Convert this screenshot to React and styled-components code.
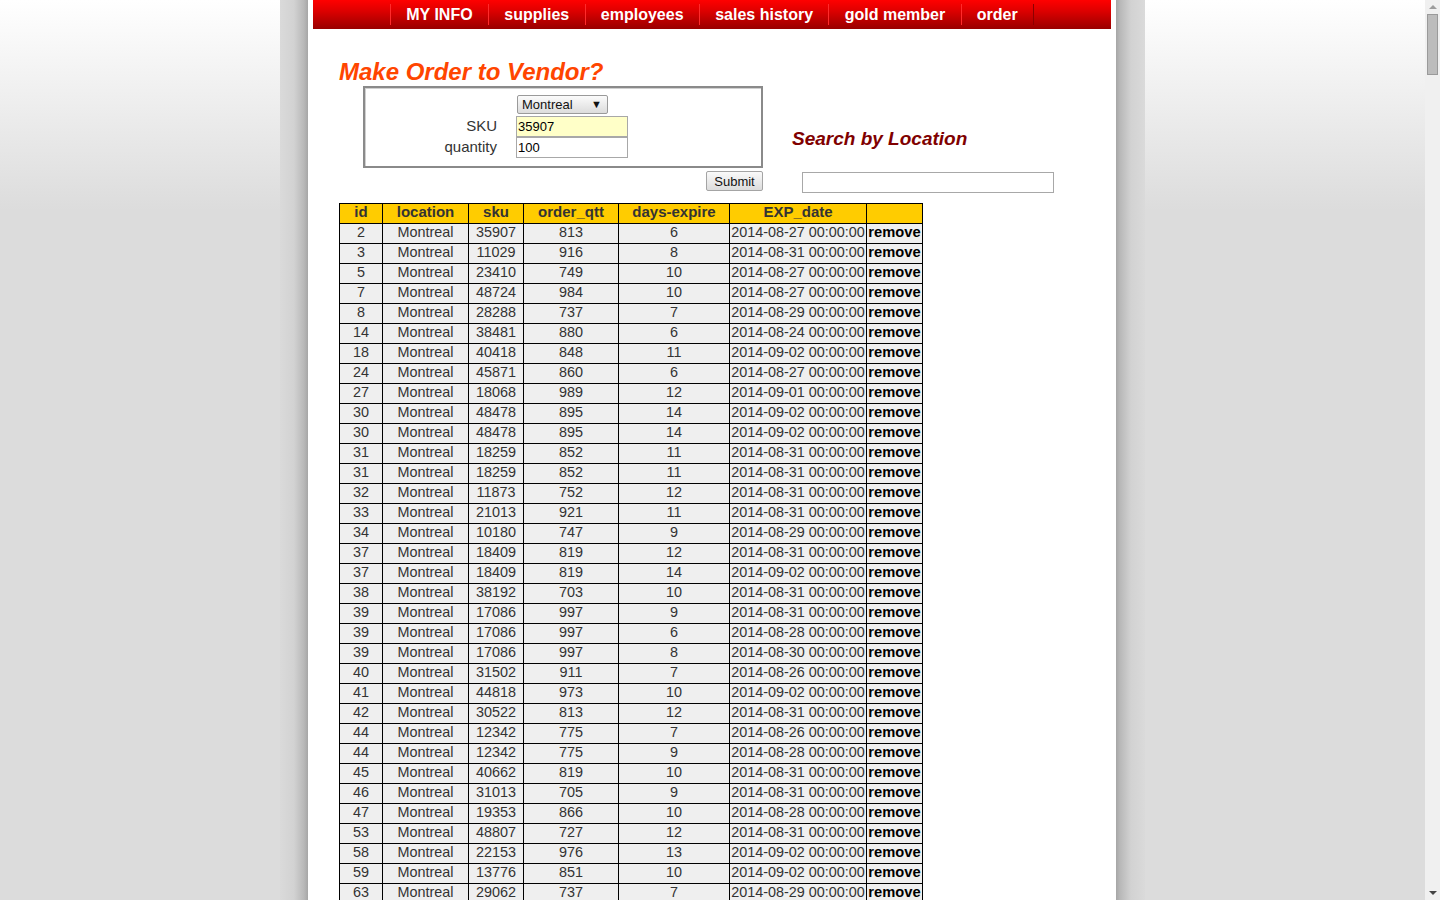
import React from 'react';
import styled, { createGlobalStyle } from 'styled-components';

const GlobalStyle = createGlobalStyle`
  html, body { height: 100%; }
  body {
    margin: 0;
    overflow: hidden;
    font-family: "Liberation Sans", Arial, sans-serif;
    color: #333;
    background: #dcdcdc;
  }
`;

const Frame = styled.div`
  display: flex;
  height: 100vh;
  overflow: hidden;
`;

const Viewport = styled.div`
  flex: 1;
  min-width: 0;
  overflow: hidden;
  background: #dcdcdc linear-gradient(to bottom, #ffffff 0, #dcdcdc 210px) no-repeat;
`;

const ScrollTrack = styled.div`
  width: 15px;
  flex: none;
  display: flex;
  flex-direction: column;
  align-items: center;
  background: #f0f0f0;
`;

const ScrollButton = styled.div`
  height: 14px;
  width: 15px;
  display: flex;
  justify-content: center;
  align-items: flex-start;
  padding-top: 5px;
  box-sizing: border-box;
`;

const Arrow = styled.span`
  width: 0;
  height: 0;
  border-left: 4px solid transparent;
  border-right: 4px solid transparent;
  ${p =>
    p.$down
      ? 'border-top: 4px solid #444;'
      : 'border-bottom: 4px solid #9c9c9c;'}
`;

const Thumb = styled.div`
  box-sizing: border-box;
  width: 11px;
  height: 61px;
  background: #bcbcbc;
  border: 1px solid #9a9a9a;
`;

const TrackFill = styled.div`
  flex: 1;
`;

const Shell = styled.div`
  box-sizing: border-box;
  width: 865px;
  min-height: 100vh;
  margin: 0 auto;
  padding: 0 29px 0 28px;
  background: linear-gradient(
    to right,
    #dadada 0,
    #d2d2d2 14px,
    #b8b8b8 24px,
    #a6a6a6 28px,
    #a6a6a6 calc(100% - 29px),
    #b8b8b8 calc(100% - 25px),
    #d2d2d2 calc(100% - 14px),
    #dadada 100%
  );
`;

const Page = styled.div`
  background: #fff;
  min-height: 100vh;
  padding: 0 5px 40px;
`;

const NavBar = styled.nav`
  height: 29px;
  display: flex;
  justify-content: center;
  background: linear-gradient(to bottom, #ff0000 0, #e00000 35%, #990000 100%);
`;

const NavItem = styled.a`
  display: block;
  margin-top: 4px;
  height: 21px;
  line-height: 21px;
  padding: 0 15.33px;
  border-left: 1px solid #ff2b2b;
  color: #fff;
  font-weight: bold;
  font-size: 16px;
  text-decoration: none;
  white-space: nowrap;
  &:last-child {
    border-right: 1px solid #8c0000;
  }
`;

const Content = styled.div`
  padding-left: 26px;
`;

const Title = styled.h1`
  margin: 29px 0 0;
  font-size: 24px;
  font-weight: bold;
  font-style: italic;
  line-height: normal;
  color: #ff4500;
`;

const FormRow = styled.div`
  display: flex;
  align-items: flex-start;
`;

const LeftCol = styled.div`
  margin-left: 24px;
  width: 400px;
  display: flex;
  flex-direction: column;
  align-items: flex-end;
`;

const FormBox = styled.div`
  box-sizing: border-box;
  width: 400px;
  height: 82px;
  border: 2px solid #8a8a8a;
  box-shadow: inset 1px 1px 0 #d0d0d0;
  padding-top: 7px;
`;

const FormGrid = styled.div`
  display: grid;
  grid-template-columns: 132px 112px;
  column-gap: 19px;
  align-items: center;
`;

const Label = styled.label`
  text-align: right;
  font-size: 15px;
  line-height: 17px;
  padding-bottom: 2px;
  color: #333;
`;

const SelectWrap = styled.div`
  grid-column: 2;
  position: relative;
  width: 91px;
  height: 19px;
  margin: 0 0 2px 1px;
`;

const Select = styled.select`
  appearance: none;
  -webkit-appearance: none;
  box-sizing: border-box;
  width: 100%;
  height: 100%;
  margin: 0;
  padding: 0 0 0 4px;
  border: 1px solid #9a9a9a;
  border-radius: 2px;
  background: linear-gradient(to bottom, #fbfbfb, #dcdcdc);
  font-family: "Liberation Sans", Arial, sans-serif;
  font-size: 13px;
  color: #111;
`;

const SelectArrow = styled.span`
  position: absolute;
  right: 6px;
  top: 1px;
  font-size: 11px;
  line-height: 16px;
  color: #111;
  pointer-events: none;
`;

const TextInput = styled.input`
  box-sizing: border-box;
  width: ${p => p.$w || 112}px;
  height: 21px;
  margin: 0;
  padding: 0 1px;
  border: 1px solid #a8a8a8;
  background: ${p => (p.$highlight ? '#ffffc8' : '#fff')};
  font-family: "Liberation Sans", Arial, sans-serif;
  font-size: 13px;
  color: #000;
  outline: none;
`;

const SubmitButton = styled.button`
  box-sizing: border-box;
  margin-top: 3px;
  width: 57px;
  height: 20px;
  padding: 0;
  border: 1px solid #a4a4a4;
  border-radius: 2px;
  background: linear-gradient(to bottom, #fafafa, #dcdcdc);
  font-family: "Liberation Sans", Arial, sans-serif;
  font-size: 13px;
  color: #111;
`;

const RightCol = styled.div`
  padding-left: 29px;
  display: flex;
  flex-direction: column;
  align-items: flex-start;
`;

const SearchTitle = styled.h2`
  margin: 41.5px 0 0;
  font-size: 19px;
  font-weight: bold;
  font-style: italic;
  line-height: normal;
  color: #800000;
`;

const SearchInput = styled(TextInput)`
  margin: 22px 0 0 10px;
`;

const Table = styled.table`
  margin-top: 10px;
  border-collapse: collapse;
  table-layout: fixed;
  font-size: 14.4px;
`;

const Col = styled.col`
  width: ${p => p.$w}px;
`;

const HeadCell = styled.th`
  box-sizing: border-box;
  height: 20px;
  padding: 0 1px 2px;
  line-height: 16px;
  vertical-align: middle;
  border: 1px solid #000;
  background: #ffcc00;
  font-size: 15px;
  font-weight: bold;
  color: #333;
  text-align: center;
  white-space: nowrap;
`;

const Cell = styled.td`
  box-sizing: border-box;
  height: 20px;
  padding: 0 1px 2px;
  line-height: 16px;
  vertical-align: middle;
  border: 1px solid #000;
  background: #efefef;
  color: ${p => (p.$action ? '#000' : '#333')};
  font-size: ${p => (p.$action ? '14.7px' : '14.4px')};
  font-weight: ${p => (p.$action ? 'bold' : 'normal')};
  text-align: center;
  white-space: nowrap;
`;

const columns = [
  { key: 'id', label: 'id', w: 43 },
  { key: 'location', label: 'location', w: 86 },
  { key: 'sku', label: 'sku', w: 55 },
  { key: 'qty', label: 'order_qtt', w: 95 },
  { key: 'days', label: 'days-expire', w: 111 },
  { key: 'date', label: 'EXP_date', w: 137 },
  { key: 'action', label: '', w: 56 },
];

const baseRows = [
  [2, 35907, 813, 6, '2014-08-27'],
  [3, 11029, 916, 8, '2014-08-31'],
  [5, 23410, 749, 10, '2014-08-27'],
  [7, 48724, 984, 10, '2014-08-27'],
  [8, 28288, 737, 7, '2014-08-29'],
  [14, 38481, 880, 6, '2014-08-24'],
  [18, 40418, 848, 11, '2014-09-02'],
  [24, 45871, 860, 6, '2014-08-27'],
  [27, 18068, 989, 12, '2014-09-01'],
  [30, 48478, 895, 14, '2014-09-02'],
  [30, 48478, 895, 14, '2014-09-02'],
  [31, 18259, 852, 11, '2014-08-31'],
  [31, 18259, 852, 11, '2014-08-31'],
  [32, 11873, 752, 12, '2014-08-31'],
  [33, 21013, 921, 11, '2014-08-31'],
  [34, 10180, 747, 9, '2014-08-29'],
  [37, 18409, 819, 12, '2014-08-31'],
  [37, 18409, 819, 14, '2014-09-02'],
  [38, 38192, 703, 10, '2014-08-31'],
  [39, 17086, 997, 9, '2014-08-31'],
  [39, 17086, 997, 6, '2014-08-28'],
  [39, 17086, 997, 8, '2014-08-30'],
  [40, 31502, 911, 7, '2014-08-26'],
  [41, 44818, 973, 10, '2014-09-02'],
  [42, 30522, 813, 12, '2014-08-31'],
  [44, 12342, 775, 7, '2014-08-26'],
  [44, 12342, 775, 9, '2014-08-28'],
  [45, 40662, 819, 10, '2014-08-31'],
  [46, 31013, 705, 9, '2014-08-31'],
  [47, 19353, 866, 10, '2014-08-28'],
  [53, 48807, 727, 12, '2014-08-31'],
  [58, 22153, 976, 13, '2014-09-02'],
  [59, 13776, 851, 10, '2014-09-02'],
  [63, 29062, 737, 7, '2014-08-29'],
  [65, 27514, 912, 11, '2014-08-31'],
  [66, 41290, 788, 8, '2014-08-28'],
];

const rows = baseRows.map(r => ({
  id: r[0],
  location: 'Montreal',
  sku: r[1],
  qty: r[2],
  days: r[3],
  date: `${r[4]} 00:00:00`,
}));

const navLinks = ['MY INFO', 'supplies', 'employees', 'sales history', 'gold member', 'order'];

export default function App() {
  return (
    <>
      <GlobalStyle />
      <Frame>
        <Viewport>
          <Shell>
            <Page>
              <NavBar>
                {navLinks.map(l => (
                  <NavItem key={l} href="#">{l}</NavItem>
                ))}
              </NavBar>
              <Content>
                <Title>Make Order to Vendor?</Title>
                <FormRow>
                  <LeftCol>
                    <FormBox>
                      <FormGrid>
                        <SelectWrap>
                          <Select defaultValue="Montreal">
                            <option>Montreal</option>
                            <option>Toronto</option>
                            <option>Vancouver</option>
                          </Select>
                          <SelectArrow>▼</SelectArrow>
                        </SelectWrap>
                        <Label>SKU</Label>
                        <TextInput $highlight defaultValue="35907" />
                        <Label>quantity</Label>
                        <TextInput defaultValue="100" />
                      </FormGrid>
                    </FormBox>
                    <SubmitButton>Submit</SubmitButton>
                  </LeftCol>
                  <RightCol>
                    <SearchTitle>Search by Location</SearchTitle>
                    <SearchInput $w={252} />
                  </RightCol>
                </FormRow>
                <Table>
                  <colgroup>
                    {columns.map(c => (
                      <Col key={c.key} $w={c.w} />
                    ))}
                  </colgroup>
                  <thead>
                    <tr>
                      {columns.map(c => (
                        <HeadCell key={c.key}>{c.label}</HeadCell>
                      ))}
                    </tr>
                  </thead>
                  <tbody>
                    {rows.map((r, i) => (
                      <tr key={i}>
                        <Cell>{r.id}</Cell>
                        <Cell>{r.location}</Cell>
                        <Cell>{r.sku}</Cell>
                        <Cell>{r.qty}</Cell>
                        <Cell>{r.days}</Cell>
                        <Cell>{r.date}</Cell>
                        <Cell $action>remove</Cell>
                      </tr>
                    ))}
                  </tbody>
                </Table>
              </Content>
            </Page>
          </Shell>
        </Viewport>
        <ScrollTrack>
          <ScrollButton>
            <Arrow />
          </ScrollButton>
          <Thumb />
          <TrackFill />
          <ScrollButton $down>
            <Arrow $down />
          </ScrollButton>
        </ScrollTrack>
      </Frame>
    </>
  );
}
